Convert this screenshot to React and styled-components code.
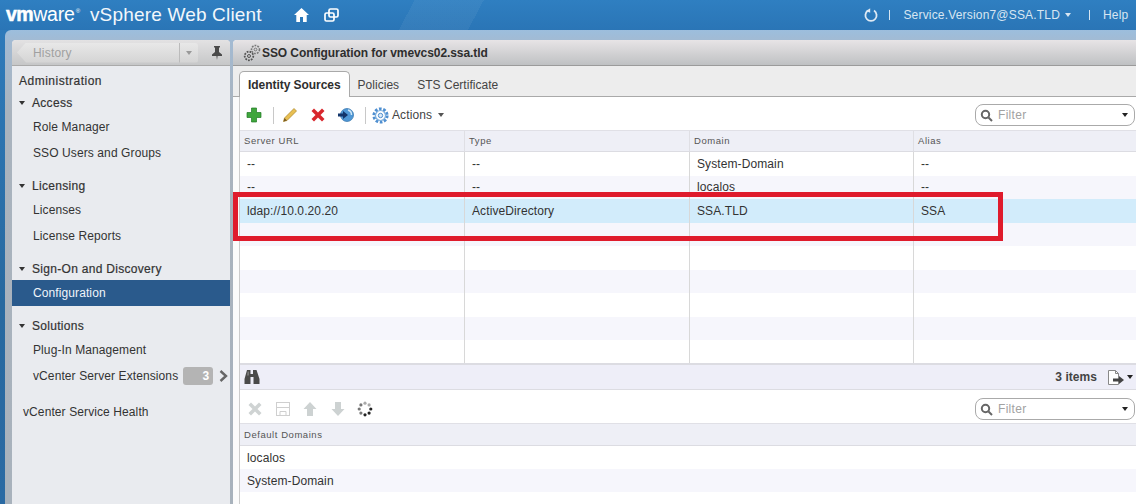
import React from "react";
import styled, { createGlobalStyle } from "styled-components";

const Global = createGlobalStyle`
  html, body { margin: 0; padding: 0; background: #2a73b4; }
  * { box-sizing: border-box; }
  body { font-family: "Liberation Sans", Arial, sans-serif; font-size: 12px; color: #333; }
`;

const Page = styled.div`
  position: relative; width: 1136px; height: 504px; overflow: hidden;
  display: flex; flex-direction: column;
  background: linear-gradient(180deg, #2f7cbd 0%, #28699f 60%, #2a6aa3 100%);
`;
const Header = styled.header`
  height: 30px; flex: none; display: flex; align-items: center; color: #fff;
  padding-left: 6px;
  background:
    linear-gradient(118deg, transparent 0 36%, rgba(255,255,255,.05) 36% 42%, transparent 42%),
    linear-gradient(180deg, #2f7fc1, #2a75b6);
`;
const Logo = styled.div`font-size: 19.5px; line-height: 1; letter-spacing: -.2px; font-weight: 400; white-space: nowrap;
  b { font-weight: 700; letter-spacing: -.5px; -webkit-text-stroke: .5px #fff; } sup { font-size: 6px; vertical-align: 8px; margin: 0 1px; }`;
const Product = styled.div`font-size: 19px; margin-left: 9px; letter-spacing: .18px; white-space: nowrap; color: #f2f7fb;`;
const HeadIcons = styled.div`display: flex; gap: 15px; align-items: center; margin-left: 32px;`;
const HeadRight = styled.div`margin-left: auto; display: flex; align-items: center; font-size: 12px; color: #d8e6f2; letter-spacing: .18px;`;
const HeadSep = styled.span`width: 1px; height: 10px; background: #d8e6f2; margin: ${p => p.$m};`;
const MiniCaret = styled.i`display: inline-block; flex: none; border-left: 3.5px solid transparent; border-right: 3.5px solid transparent;
  border-top: 4px solid ${p => p.$c || "#333"}; margin-left: ${p => p.$ml ?? 5}px; vertical-align: middle;`;

const Frame = styled.div`
  flex: 1; min-height: 0; margin-left: 5px; padding: 10px 0 0 7px; display: flex; gap: 3px;
  border-radius: 6px 0 0 0;
  background: linear-gradient(180deg, #9cbedd 0, #a3bad2 12px, #a9b3be 80px, #a8b2bc 100%);
`;
const Sidebar = styled.aside`width: 218px; flex: none; background: #e9ebef; border-radius: 4px 4px 0 0; overflow: hidden;`;
const HistoryBar = styled.div`
  height: 26px; display: flex; align-items: center; padding: 0 8px 0 5px;
  background: linear-gradient(180deg, #e3e2e3, #c6c7c8); border-bottom: 1px solid #aaa;
`;
const HistoryBack = styled.div`
  width: 181px; height: 20px; display: flex; align-items: center; padding-left: 16px;
  color: #a0a0a0; font-size: 12px; background: linear-gradient(180deg,#e8e8e8,#d4d4d4);
  border-radius: 0 3px 3px 0; letter-spacing: .2px;
  clip-path: polygon(9px 0, 100% 0, 100% 100%, 9px 100%, 0 50%);
`;
const HistoryDrop = styled.div`margin-left: auto; width: 19px; height: 100%; border-left: 1px solid #bbb; display: flex; align-items: center; justify-content: center;`;
const NavList = styled.nav`padding-top: 6px;`;
const NavTitle = styled.div`height: 19px; line-height: 19px; padding-left: 7px; color: #333; letter-spacing: .5px; -webkit-text-stroke: .2px #333;`;
const Group = styled.section`margin-top: ${p => p.$mt ?? 8}px;`;
const GroupHead = styled.div`height: 22px; display: flex; align-items: center; padding: 1px 0 0 7px; margin-bottom: 1px; color: #333; letter-spacing: .3px; -webkit-text-stroke: .2px #333;
  span { margin-left: 7px; }`;
const NavItem = styled.div`height: 26px; display: flex; align-items: center; padding-left: ${p => p.$pl ?? 21}px; white-space: nowrap; letter-spacing: .1px;
  color: ${p => p.$active ? "#f0f5fa" : "#333"}; background: ${p => p.$active ? "#2a5a8c" : "transparent"};`;
const Badge = styled.span`width: 30px; height: 18px; margin-left: 5px; margin-right: 6px; background: #b4b4b4; border-radius: 3px; color: #fff; font-weight: 700; text-align: right; line-height: 18px; padding-right: 4px;`;

const Main = styled.main`flex: 1; min-width: 0; display: flex; flex-direction: column; background: #fbfbfb; border-radius: 4px 0 0 0; overflow: hidden;`;
const TitleBar = styled.div`height: 26px; flex: none; display: flex; align-items: center; padding-left: 10px; gap: 1px; font-weight: 700; color: #2e2e2e; letter-spacing: -.08px;
  background: linear-gradient(180deg, #e7e4e6, #bfc1c3); border-bottom: 1px solid #9b9b9b;`;
const TabStrip = styled.div`height: 31px; flex: none; display: flex; align-items: flex-end; padding-left: 6px; background: #ededed; border-bottom: 1px solid #a9a9a9;`;
const Tab = styled.div`
  height: 25px; display: flex; align-items: center; white-space: nowrap; letter-spacing: .03px;
  ${p => p.$active
    ? `padding: 0 8px; margin-right: 8px; font-weight:700; letter-spacing:-.05px; color:#2e2e2e; background:#fff; border:1px solid #a9a9a9; border-bottom:none; border-radius:5px 5px 0 0; margin-bottom:-1px; height:26px;`
    : `margin-right: 18px; color:#444; margin-bottom:-1px;`}
`;
const Pane = styled.div`flex: 1; min-height: 0; margin-left: 6px; border-left: 1px solid #ccc; background: #fff; display: flex; flex-direction: column;`;
const Toolbar = styled.div`height: ${p => p.$h}px; flex: none; display: flex; align-items: center; gap: ${p => p.$gap}px; padding: ${p => p.$pt}px 1px 0 ${p => p.$pl}px; background: #fff;`;
const Sep = styled.span`width: 1px; height: 17px; background: #c8c8c8; margin: 0 -4px 0 -1px;`;
const ActionGroup = styled.div`display: flex; align-items: center; gap: 3px; margin-left: -2px; color: #444; letter-spacing: .1px;`;
const Filter = styled.div`margin-left: auto; width: 160px; height: 22px; border: 1px solid #aaa; border-radius: 8px; display: flex; align-items: center; padding: 0 6px 0 4px; gap: 5px; color: #a2a2a2; background: #fff; letter-spacing: .3px;`;
const TableHead = styled.div`height: ${p => p.$h}px; flex: none; display: grid; grid-template-columns: ${p => p.$cols}; background: #eeeff6; border-top: 1px solid #e0e0e6; border-bottom: 1px solid #dcdce2;`;
const HeadCell = styled.div`display: flex; align-items: center; padding: 0 0 1px 4px; font-size: 9.5px; letter-spacing: .55px; color: #555; border-left: 1px solid #dfdfe4; &:first-child { border-left: none; }`;
const Rows = styled.div`height: ${p => p.$h}px; flex: none; overflow: hidden;`;
const Row = styled.div`height: ${p => p.$h}px; display: grid; grid-template-columns: ${p => p.$cols}; background: ${p => p.$bg}; color: #333;`;
const Cell = styled.div`display: flex; align-items: center; padding-left: 7px; letter-spacing: .1px; border-left: ${p => p.$line ? "1px solid #d8d8d8" : "none"}; &:first-child { border-left: none; }`;
const FootBar = styled.div`height: 27px; flex: none; display: flex; align-items: center; padding: 0 3px 0 4px; background: #eeeef8; border-top: 2px solid #dcdce2; border-bottom: 1px solid #dcdce2; color: #333;`;
const Items = styled.span`margin-left: auto; margin-right: 11px; font-weight: 700; color: #444; letter-spacing: .05px;`;
const RedBox = styled.div`position: absolute; left: 233px; top: 192px; width: 770px; height: 49px; border: 5px solid #df1b2c; pointer-events: none;`;

const cols = "224px 225px 224px 1fr";
const Home = () => <svg width="15" height="14" viewBox="0 0 15 14"><path d="M7.5 0 15 7h-2.3v7H9V9H6v5H2.3V7H0z" fill="#fff"/></svg>;
const Windows = () => <svg width="15" height="14" viewBox="0 0 15 14" fill="none" stroke="#fff" strokeWidth="1.7"><rect x="5" y="1" width="9" height="8" rx="1.5"/><rect x="1" y="5" width="9" height="8" rx="1.5"/></svg>;
const Refresh = () => <svg width="14" height="15" viewBox="0 0 14 15" fill="none"><path d="M4 2.6A5.6 5.6 0 1 0 10 2.6" stroke="#dfeaf4" strokeWidth="1.8"/><path d="M6.2.2 2 3l4.2 1.8z" fill="#dfeaf4"/></svg>;
const Pin = () => <svg width="10" height="14" viewBox="0 0 10 14"><path d="M2 0h6v1L7 2v4l3 2.5V10H5.6L5 14l-.6-4H0V8.500L3 6V2L2 1z" fill="#4a4a4a"/></svg>;
const Gears = () => <svg width="18" height="18" viewBox="0 0 18 18" fill="none" stroke="#555"><circle cx="6" cy="12" r="4.300" strokeWidth="1.800" strokeDasharray="1.800 1.100"/><circle cx="6" cy="12" r="1.500"/><circle cx="12.500" cy="5.500" r="4" strokeWidth="1.600" strokeDasharray="1.800 1.100" stroke="#777"/><circle cx="12.500" cy="5.500" r="1.400" stroke="#777"/></svg>;
const Plus = () => <svg width="16" height="16" viewBox="0 0 16 16"><path d="M5.500 1h5v4.500H15v5h-4.500V15h-5v-4.500H1v-5h4.500z" fill="#3fa63c" stroke="#1f7a22" strokeWidth=".7" strokeLinejoin="round"/></svg>;
const Pencil = () => <svg width="16" height="16" viewBox="0 0 16 16"><path d="M12 1.500 14.500 4 5 13.500 1.500 14.500 2.500 11z" fill="#e8bf52" stroke="#a98526" strokeWidth=".7"/><path d="M2.500 11 5 13.500 1.500 14.500z" fill="#7a5a22"/></svg>;
const XIcon = ({ c = "#d8262c" }) => <svg width="16" height="16" viewBox="0 0 16 16"><path d="M1.500 4 4 1.500l4 4 4-4L14.500 4l-4 4 4 4-2.500 2.500-4-4-4 4L1.500 12l4-4z" fill={c}/></svg>;
const Connect = () => <svg width="16" height="16" viewBox="0 0 16 16"><circle cx="9" cy="8" r="6.500" fill="#4f98d6" stroke="#2d6ea8" strokeWidth=".7"/><path d="M10 3a5 5 0 0 1 3.500 5" stroke="#cfe6f7" strokeWidth="1.500" fill="none"/><path d="M0 6.500h5V4l5 4-5 4V9.500H0z" fill="#12356b"/></svg>;
const Gear = () => <svg width="17" height="17" viewBox="0 0 17 17" fill="none"><circle cx="8.500" cy="8.500" r="6.600" stroke="#4f8fd0" strokeWidth="3" strokeDasharray="2.600 1.600"/><circle cx="8.500" cy="8.500" r="5" stroke="#7fb0de" strokeWidth="1.200"/><circle cx="8.500" cy="8.500" r="2.200" fill="#dbe9f6" stroke="#4f8fd0"/></svg>;
const Search = () => <svg width="13" height="13" viewBox="0 0 13 13" fill="none" stroke="#666" strokeWidth="2"><circle cx="5.500" cy="5.500" r="3.700"/><path d="M8.500 8.500 12 12"/></svg>;
const Binoculars = () => <svg width="16" height="14" viewBox="0 0 16 14"><path d="M3 0h3.500v4H9V0h3.500l3 9v5H9.500V7h-3v7H.5V9z" fill="#4a4a4a"/><path d="M3.500 1.500h1.500v4H3z" fill="#777"/></svg>;
const Export = () => <svg width="17" height="15" viewBox="0 0 17 15"><path d="M.5.500h7l3 3v11H.5z" fill="#fff" stroke="#888"/><path d="M7.500.500v3h3" fill="none" stroke="#888"/><path d="M5 8.500h6V6l5 4-5 4v-2.500H5z" fill="#444"/></svg>;
const Save = () => <svg width="16" height="16" viewBox="0 0 16 16" fill="none" stroke="#cfcfcf"><rect x="1.500" y="1.500" width="13" height="13"/><path d="M1.500 6.500h13M5 10.500h6v4H5z"/></svg>;
const Arrow = ({ down }) => <svg width="16" height="16" viewBox="0 0 16 16" style={down ? { transform: "scaleY(-1)" } : undefined}><path d="M8 1l6.500 7H11v7H5V8H1.500z" fill="#cdd2d2"/></svg>;
const Spinner = () => <svg width="16" height="16" viewBox="0 0 16 16">{[...Array(8)].map((_, i) => { const a = i * Math.PI / 4; return <circle key={i} cx={8 + 5.800 * Math.cos(a)} cy={8 + 5.800 * Math.sin(a)} r="1.600" fill={i < 3 ? "#222" : i < 6 ? "#777" : "#aaa"} />; })}</svg>;
const Chevron = () => <svg width="9" height="12" viewBox="0 0 9 12" fill="none" stroke="#666" strokeWidth="2.400"><path d="M1.500 1 7 6l-5.500 5"/></svg>;

const rows = [
  ["--", "--", "System-Domain", "--"],
  ["--", "--", "localos", "--"],
  ["ldap://10.0.20.20", "ActiveDirectory", "SSA.TLD", "SSA"],
  ...Array(6).fill(["", "", "", ""]),
];

const FilterBox = () => (
  <Filter><Search /><span>Filter</span><MiniCaret $c="#222" style={{ marginLeft: "auto" }} /></Filter>
);

export default function App() {
  return (
    <Page>
      <Global />
      <Header>
        <Logo><b>vm</b>ware<sup>®</sup></Logo>
        <Product>vSphere Web Client</Product>
        <HeadIcons><Home /><Windows /></HeadIcons>
        <HeadRight>
          <Refresh />
          <HeadSep $m="0 13px 0 11px" />
          <span>Service.Version7@SSA.TLD</span><MiniCaret $c="#d8e6f2" />
          <HeadSep $m="0 13px 0 18px" />
          <span style={{ width: 33 }}>Help</span>
        </HeadRight>
      </Header>
      <Frame>
        <Sidebar>
          <HistoryBar>
            <HistoryBack>History<HistoryDrop><MiniCaret $c="#999" $ml={0} /></HistoryDrop></HistoryBack>
            <span style={{ marginLeft: "auto", display: "flex" }}><Pin /></span>
          </HistoryBar>
          <NavList>
            <NavTitle>Administration</NavTitle>
            <Group $mt={0}>
              <GroupHead><MiniCaret $ml={0} /><span>Access</span></GroupHead>
              <NavItem>Role Manager</NavItem>
              <NavItem>SSO Users and Groups</NavItem>
            </Group>
            <Group>
              <GroupHead><MiniCaret $ml={0} /><span>Licensing</span></GroupHead>
              <NavItem>Licenses</NavItem>
              <NavItem>License Reports</NavItem>
            </Group>
            <Group>
              <GroupHead><MiniCaret $ml={0} /><span>Sign-On and Discovery</span></GroupHead>
              <NavItem $active>Configuration</NavItem>
            </Group>
            <Group>
              <GroupHead><MiniCaret $ml={0} /><span>Solutions</span></GroupHead>
              <NavItem>Plug-In Management</NavItem>
              <NavItem>vCenter Server Extensions<Badge>3</Badge><Chevron /></NavItem>
            </Group>
            <Group $mt={10}>
              <NavItem $pl={11}>vCenter Service Health</NavItem>
            </Group>
          </NavList>
        </Sidebar>
        <Main>
          <TitleBar><Gears />SSO Configuration for vmevcs02.ssa.tld</TitleBar>
          <TabStrip>
            <Tab $active>Identity Sources</Tab>
            <Tab>Policies</Tab>
            <Tab>STS Certificate</Tab>
          </TabStrip>
          <Pane>
            <Toolbar $h={33} $gap={12} $pl={6} $pt={3}>
              <Plus /><Sep /><Pencil /><XIcon /><Connect /><Sep />
              <ActionGroup><Gear />Actions<MiniCaret $c="#555" $ml={3} /></ActionGroup>
              <FilterBox />
            </Toolbar>
            <TableHead $h={22} $cols={cols}>
              <HeadCell>Server URL</HeadCell><HeadCell>Type</HeadCell><HeadCell>Domain</HeadCell><HeadCell>Alias</HeadCell>
            </TableHead>
            <Rows $h={211}>
              {rows.map((r, i) => (
                <Row key={i} $h={23.5} $cols={cols} $bg={i === 2 ? "#d2ecfb" : i % 2 ? "#f6f6fc" : "#fff"}>
                  {r.map((c, j) => <Cell key={j} $line>{c}</Cell>)}
                </Row>
              ))}
            </Rows>
            <FootBar>
              <Binoculars />
              <Items>3 items</Items>
              <Export /><MiniCaret $c="#222" $ml={2} />
            </FootBar>
            <Toolbar $h={33} $gap={11.5} $pl={7} $pt={5}>
              <XIcon c="#cfd3d3" /><Save /><Arrow /><Arrow down /><Spinner />
              <FilterBox />
            </Toolbar>
            <TableHead $h={23} $cols="1fr">
              <HeadCell>Default Domains</HeadCell>
            </TableHead>
            <Rows $h={60}>
              <Row $h={23} $cols="1fr" $bg="#fff"><Cell>localos</Cell></Row>
              <Row $h={23} $cols="1fr" $bg="#f6f6fc"><Cell>System-Domain</Cell></Row>
            </Rows>
          </Pane>
        </Main>
      </Frame>
      <RedBox />
    </Page>
  );
}
